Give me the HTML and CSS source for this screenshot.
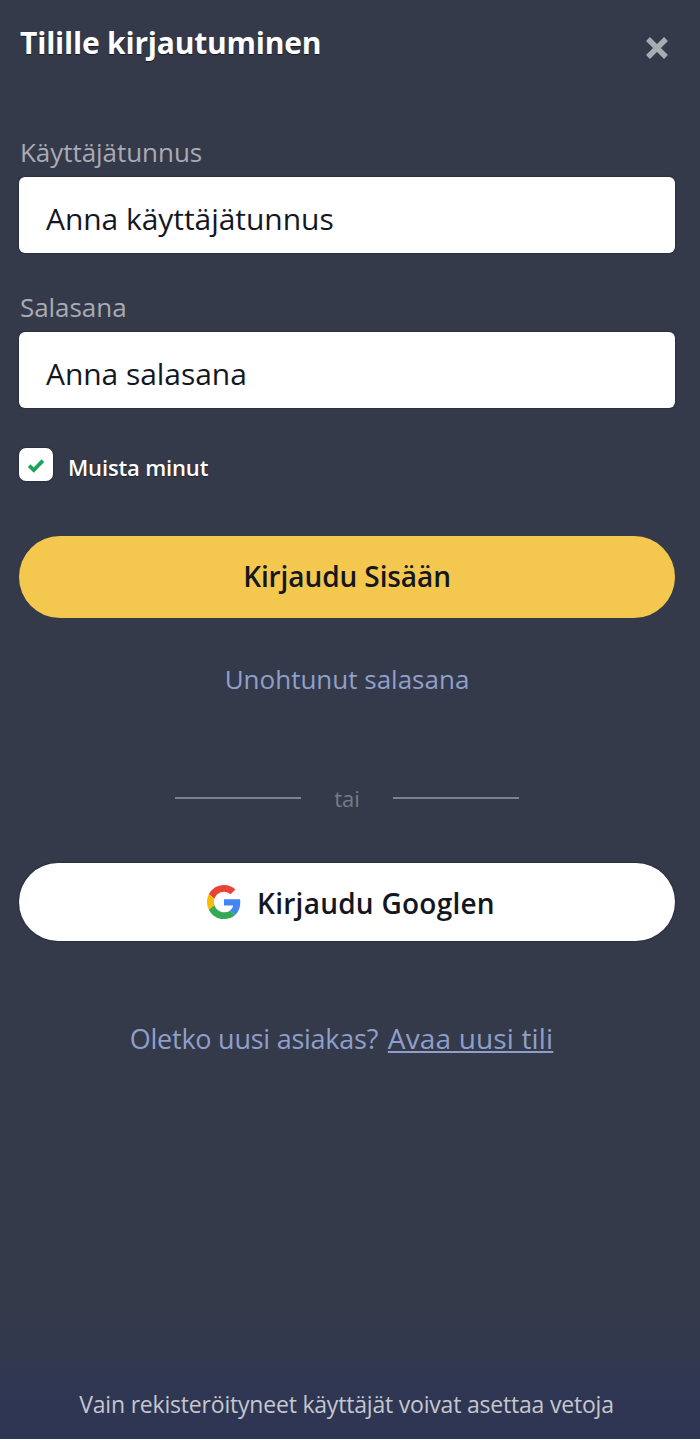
FILE: index.html
```html
<!DOCTYPE html>
<html lang="fi">
<head>
<meta charset="utf-8">
<title>Tilille kirjautuminen</title>
<link rel="stylesheet" href="styles.css">
</head>
<body>
<main class="panel">
  <header class="head">
    <h1 class="title">Tilille kirjautuminen</h1>
    <svg class="close" viewBox="0 0 24 24" aria-label="Sulje"><path d="M3 3 21 21M21 3 3 21"/></svg>
  </header>
  <form class="form">
    <label class="label" for="u">Käyttäjätunnus</label>
    <div class="input" id="u">Anna käyttäjätunnus</div>
    <label class="label second" for="p">Salasana</label>
    <div class="input" id="p">Anna salasana</div>
    <div class="remember">
      <span class="check"><svg viewBox="0 0 16 16"><path d="M2.5 8.5 6.2 12 13.5 4.5"/></svg></span>
      <span class="remember-text">Muista minut</span>
    </div>
    <div class="btn primary">Kirjaudu Sisään</div>
    <a class="forgot">Unohtunut salasana</a>
    <div class="divider"><span class="line"></span><span class="or">tai</span><span class="line"></span></div>
    <div class="btn google">
      <svg class="g" viewBox="0 0 48 48">
        <path fill="#EA4335" d="M24 9.5c3.54 0 6.71 1.22 9.21 3.6l6.85-6.85C35.9 2.38 30.47 0 24 0 14.62 0 6.51 5.38 2.56 13.22l7.98 6.19C12.43 13.72 17.74 9.5 24 9.5z"/>
        <path fill="#4285F4" d="M46.98 24.55c0-1.57-.15-3.09-.38-4.55H24v9.02h12.94c-.58 2.96-2.26 5.48-4.78 7.18l7.73 6c4.51-4.18 7.09-10.36 7.09-17.65z"/>
        <path fill="#FBBC05" d="M10.53 28.59c-.48-1.45-.76-2.99-.76-4.59s.27-3.14.76-4.59l-7.98-6.19C.92 16.46 0 20.12 0 24c0 3.88.92 7.54 2.56 10.78l7.97-6.19z"/>
        <path fill="#34A853" d="M24 48c6.48 0 11.93-2.13 15.89-5.81l-7.73-6c-2.15 1.45-4.92 2.3-8.16 2.3-6.26 0-11.57-4.22-13.47-9.91l-7.98 6.19C6.51 42.62 14.62 48 24 48z"/>
      </svg>
      <span class="google-text">Kirjaudu Googlen</span>
    </div>
    <p class="signup">Oletko uusi asiakas? <a class="signup-link">Avaa uusi tili</a></p>
  </form>
  <footer class="foot">Vain rekisteröityneet käyttäjät voivat asettaa vetoja</footer>
</main>
</body>
</html>
```
FILE: styles.css
```css
* { box-sizing: border-box; }
html, body { margin: 0; height: 100%; }
body { font-family: "Open Sans", "Noto Sans", sans-serif; }
.panel {
  height: 1439px;
  padding: 0 25px 0 19px;
  display: flex;
  flex-direction: column;
  background: linear-gradient(180deg, #343a4a 0, #343a4a 1320px, #2f3653 1400px, #2f3653 100%);
  overflow: hidden;
}
.head { display: flex; justify-content: space-between; align-items: flex-start; height: 136px; }
.title { margin: 23px 0 0 1px; font-size: 30px; line-height: 40px; font-weight: 700; color: #fff; letter-spacing: -.2px; text-shadow: 0 1px 1px rgba(0,0,0,.55); }
.close { width: 24px; height: 24px; margin: 36px 6px 0 0; fill: none; stroke: #a9acb3; stroke-width: 5.5; }
.form { display: flex; flex-direction: column; flex: 1; }
.label { font-size: 26px; line-height: 33px; color: #a8abb2; margin-left: 1px; letter-spacing: -.05px; height: 41px; }
.label.second { margin-top: 38px; }
.input {
  height: 76px; border-radius: 6px; background: #fff; color: #14171f;
  font-size: 30px; line-height: 83px; padding-left: 27px; letter-spacing: -.05px;
  box-shadow: 0 0 2px #14171f;
}
.remember { display: flex; align-items: center; gap: 15px; margin-top: 40px; height: 33px; }
.check { width: 34px; height: 33px; border-radius: 7px; background: #fff; display: flex; align-items: center; justify-content: center; box-shadow: 0 0 2px #14171f; }
.check svg { width: 20px; height: 20px; fill: none; stroke: #1aa35a; stroke-width: 3; }
.remember-text { padding-top: 4px; font-size: 22px; line-height: 40px; font-weight: 600; color: #fff; letter-spacing: -.15px; text-shadow: 0 1px 1px rgba(0,0,0,.4); }
.btn { display: flex; align-items: center; justify-content: center; color: #14171f; font-size: 28px; font-weight: 600; border-radius: 42px; }
.primary { margin-top: 55px; height: 82px; background: #f4c84e; padding-bottom: 2px; letter-spacing: -.1px; }
.forgot { margin-top: 41px; text-align: center; font-size: 26px; line-height: 40px; color: #8f9fca; }
.divider { display: flex; align-items: center; justify-content: center; gap: 33px; margin-top: 79px; height: 40px; }
.line { width: 126px; height: 2px; background: #7d818c; }
.or { font-size: 22px; line-height: 30px; color: #777b86; }
.google { margin-top: 45px; height: 78px; padding-left: 8px; background: #fff; gap: 16px; letter-spacing: .25px; box-shadow: 0 0 2px #14171f; }
.google-text { padding-top: 2px; }
.g { width: 34px; height: 34px; }
.signup { margin: 77px 0 0; padding-right: 11px; text-align: center; font-size: 27px; line-height: 40px; color: #8f9fca; letter-spacing: -.25px; }
.signup-link { text-decoration: underline; margin-left: 3px; font-size: 28px; letter-spacing: .15px; }
.foot { margin: 0 0 16px -1px; text-align: center; font-size: 23px; line-height: 38px; color: #c4c7cd; letter-spacing: -.2px; }
```
